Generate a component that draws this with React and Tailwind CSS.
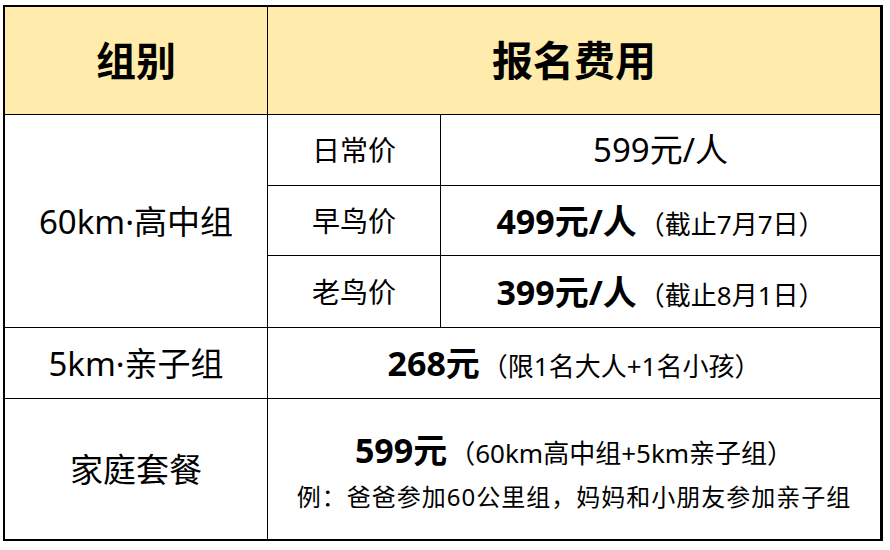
const font = { fontFamily: '"Noto Sans", "Noto Sans CJK SC", sans-serif' };

function Price({ main, note }) {
  return (
    <div className="flex items-baseline justify-center">
      <span className="text-[34px] font-bold leading-none">{main}</span>
      {note && <span className="text-[26px] leading-none ml-[2px]">{note}</span>}
    </div>
  );
}

export default function App() {
  return (
    <div className="bg-white w-[890px] h-[550px] text-black" style={font}>
      <div className="ml-[3px] mt-[5px] w-[880px] h-[536px] border-2 border-r-[3px] border-black flex flex-col">
        {/* Header */}
        <div className="h-[108px] flex border-b border-black bg-[#ffebab] shrink-0">
          <div className="w-[263px] border-r border-black flex items-center justify-center">
            <span className="text-[40px] font-bold leading-none">组别</span>
          </div>
          <div className="flex-1 flex items-center justify-center">
            <span className="text-[41px] font-bold leading-none">报名费用</span>
          </div>
        </div>

        {/* 60km */}
        <div className="h-[213px] flex border-b border-black shrink-0">
          <div className="w-[263px] border-r border-black flex items-center justify-center">
            <span className="text-[33px] leading-none">60km·高中组</span>
          </div>
          <div className="flex-1 flex flex-col">
            {[
              ['日常价', null],
              ['早鸟价', ['499元/人', '（截止7月7日）']],
              ['老鸟价', ['399元/人', '（截止8月1日）']],
            ].map(([label, price], i) => (
              <div key={label} className={`h-[71px] flex ${i < 2 ? 'border-b border-black' : ''}`}>
                <div className="w-[173px] border-r border-black flex items-center justify-center">
                  <span className="text-[28px] leading-none">{label}</span>
                </div>
                <div className="flex-1 flex items-center justify-center">
                  {price ? (
                    <Price main={price[0]} note={price[1]} />
                  ) : (
                    <span className="text-[33px] leading-none">599元/人</span>
                  )}
                </div>
              </div>
            ))}
          </div>
        </div>

        {/* 5km */}
        <div className="h-[71px] flex border-b border-black shrink-0">
          <div className="w-[263px] border-r border-black flex items-center justify-center">
            <span className="text-[33px] leading-none">5km·亲子组</span>
          </div>
          <div className="flex-1 flex items-center justify-center">
            <Price main="268元" note="（限1名大人+1名小孩）" />
          </div>
        </div>

        {/* Family */}
        <div className="flex-1 flex">
          <div className="w-[263px] border-r border-black flex items-center justify-center">
            <span className="text-[33px] leading-none">家庭套餐</span>
          </div>
          <div className="flex-1 flex flex-col items-center justify-center gap-[18px] pt-[4px]">
            <Price main="599元" note="（60km高中组+5km亲子组）" />
            <span className="text-[24px] leading-none tracking-[1px]">例：爸爸参加60公里组，妈妈和小朋友参加亲子组</span>
          </div>
        </div>
      </div>
    </div>
  );
}
